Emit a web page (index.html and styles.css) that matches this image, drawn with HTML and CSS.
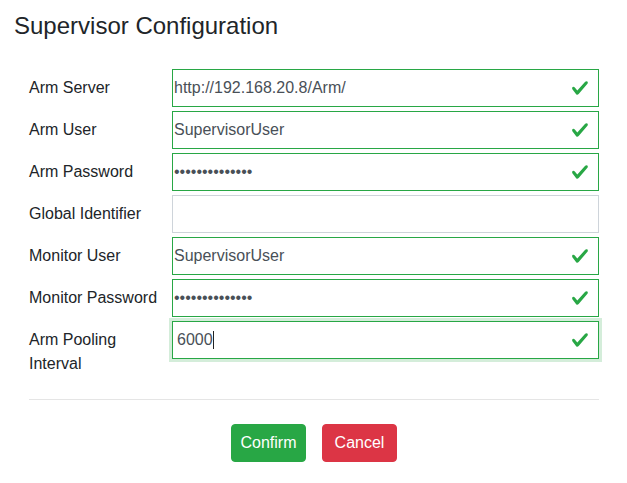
FILE: index.html
```html
<!DOCTYPE html>
<html lang="en">
<head>
<meta charset="utf-8">
<title>Supervisor Configuration</title>
<link rel="stylesheet" href="styles.css">
</head>
<body>
<div class="page">
  <h1 class="title">Supervisor Configuration</h1>
  <form class="config">
    <div class="grid">
      <label class="lbl">Arm Server</label>
      <div class="field valid">
        <input class="inp" type="text" value="http://192.168.20.8/Arm/">
        <svg class="check" viewBox="0 0 8 8"><path d="M2.3 6.73L.6 4.53c-.4-1.04.46-1.4 1.1-.8l1.1 1.4 3.4-3.8c.6-.63 1.6-.27 1.2.7l-4 4.6c-.43.5-.8.4-1.1.1z"/></svg>
      </div>

      <label class="lbl">Arm User</label>
      <div class="field valid">
        <input class="inp" type="text" value="SupervisorUser">
        <svg class="check" viewBox="0 0 8 8"><path d="M2.3 6.73L.6 4.53c-.4-1.04.46-1.4 1.1-.8l1.1 1.4 3.4-3.8c.6-.63 1.6-.27 1.2.7l-4 4.6c-.43.5-.8.4-1.1.1z"/></svg>
      </div>

      <label class="lbl">Arm Password</label>
      <div class="field valid">
        <input class="inp" type="password" value="SupervisorUser">
        <svg class="check" viewBox="0 0 8 8"><path d="M2.3 6.73L.6 4.53c-.4-1.04.46-1.4 1.1-.8l1.1 1.4 3.4-3.8c.6-.63 1.6-.27 1.2.7l-4 4.6c-.43.5-.8.4-1.1.1z"/></svg>
      </div>

      <label class="lbl">Global Identifier</label>
      <div class="field">
        <input class="inp" type="text" value="">
      </div>

      <label class="lbl">Monitor User</label>
      <div class="field valid">
        <input class="inp" type="text" value="SupervisorUser">
        <svg class="check" viewBox="0 0 8 8"><path d="M2.3 6.73L.6 4.53c-.4-1.04.46-1.4 1.1-.8l1.1 1.4 3.4-3.8c.6-.63 1.6-.27 1.2.7l-4 4.6c-.43.5-.8.4-1.1.1z"/></svg>
      </div>

      <label class="lbl">Monitor Password</label>
      <div class="field valid">
        <input class="inp" type="password" value="SupervisorUser">
        <svg class="check" viewBox="0 0 8 8"><path d="M2.3 6.73L.6 4.53c-.4-1.04.46-1.4 1.1-.8l1.1 1.4 3.4-3.8c.6-.63 1.6-.27 1.2.7l-4 4.6c-.43.5-.8.4-1.1.1z"/></svg>
      </div>

      <label class="lbl">Arm Pooling Interval</label>
      <div class="field valid">
        <div class="inp focused"><span>6000</span><span class="caret"></span></div>
        <svg class="check" viewBox="0 0 8 8"><path d="M2.3 6.73L.6 4.53c-.4-1.04.46-1.4 1.1-.8l1.1 1.4 3.4-3.8c.6-.63 1.6-.27 1.2.7l-4 4.6c-.43.5-.8.4-1.1.1z"/></svg>
      </div>
    </div>
    <hr class="sep">
    <div class="actions">
      <button type="button" class="btn btn-confirm">Confirm</button>
      <button type="button" class="btn btn-cancel">Cancel</button>
    </div>
  </form>
</div>
</body>
</html>
```
FILE: styles.css
```css
* { box-sizing: border-box; }
html, body { margin: 0; padding: 0; background: #fff; }
body {
  font-family: "Liberation Sans", Arial, sans-serif;
  font-size: 16px;
  color: #212529;
}
.page {
  padding: 11px 13px 0 14px;
}
.title {
  margin: 0;
  font-size: 24px;
  font-weight: 400;
  line-height: 29px;
  color: #212529;
}
.config {
  margin-top: 29px;
  padding: 0 15px;
}
.grid {
  display: grid;
  grid-template-columns: 132px 1fr;
  column-gap: 11px;
  row-gap: 4px;
  align-items: start;
}
.lbl {
  padding: 7px 0;
  line-height: 24px;
  font-size: 16px;
  white-space: normal;
}
.field {
  position: relative;
  height: 38px;
}
.inp {
  display: flex;
  align-items: center;
  width: 100%;
  height: 38px;
  margin: 0;
  padding: 0 40px 0 1px;
  border: 1px solid #ced4da;
  border-radius: 0;
  background: #fff;
  font-family: "Liberation Sans", Arial, sans-serif;
  font-size: 16px;
  color: #495057;
  outline: none;
}
.valid .inp { border-color: #28a745; }
.inp.focused {
  padding-left: 4px;
  box-shadow: 0 0 0 3px rgba(40, 167, 69, 0.2);
}
.caret {
  display: inline-block;
  width: 1px;
  height: 18px;
  background: #222;
}
.check {
  position: absolute;
  right: 10px;
  top: 10px;
  width: 18px;
  height: 18px;
  fill: #28a745;
}
.sep {
  margin: 16px 0 24px;
  border: 0;
  border-top: 1px solid rgba(0, 0, 0, 0.1);
  height: 0;
}
.actions {
  display: flex;
  justify-content: center;
  gap: 16px;
}
.btn {
  min-width: 75px;
  font-family: "Liberation Sans", Arial, sans-serif;
  font-size: 16px;
  line-height: 24px;
  padding: 6px 8px;
  border: 1px solid transparent;
  border-radius: 4px;
  color: #fff;
  cursor: pointer;
}
.btn-confirm { background: #28a745; border-color: #28a745; }
.btn-cancel { background: #dc3545; border-color: #dc3545; }
```
